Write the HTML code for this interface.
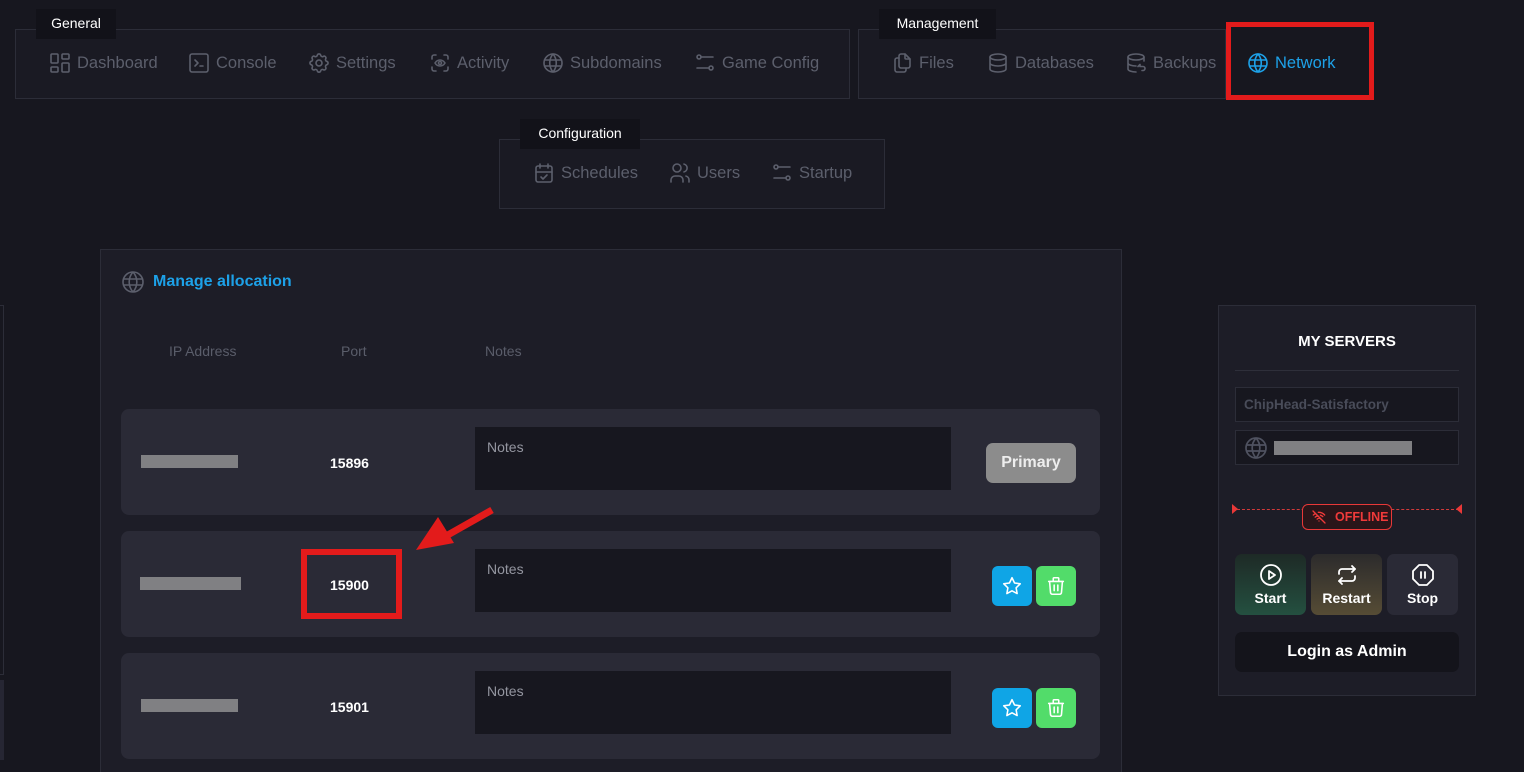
<!DOCTYPE html>
<html style="overflow:hidden;width:1524px;height:772px"><head><meta charset="utf-8"><style>
*{box-sizing:border-box;margin:0;padding:0}
body{width:1524px;height:772px;background:#17171f;font-family:"Liberation Sans",sans-serif;position:relative;overflow:hidden;color:#fff}
.a{position:absolute}
.box{position:absolute;border:1px solid #2c2d38;background:#1a1a23}
.lbl{position:absolute;background:#121219;color:#fff;font-size:14px;padding:6px 16px 8px;}
.nav{position:absolute;display:flex;align-items:center;gap:5px;color:#5c5f6c;font-size:16.5px}
.nav svg{width:24px;height:24px;fill:none;stroke:#5c5f6c;stroke-width:1.6;stroke-linecap:round;stroke-linejoin:round}
.row{position:absolute;left:121px;width:979px;height:106px;background:#2a2a36;border-radius:8px}
.ip{position:absolute;height:13px;background:#808083}
.port{position:absolute;font-weight:bold;font-size:14px;color:#fff}
.notes{position:absolute;left:354px;top:18px;width:476px;height:63px;background:#17171f;color:#9496a0;font-size:14px;padding:12px}
.btn{position:absolute;width:40px;height:40px;border-radius:6px;display:flex;align-items:center;justify-content:center}
.btn svg{width:22px;height:22px;fill:none;stroke:#fff;stroke-width:1.7;stroke-linejoin:round;stroke-linecap:round}
.hdr{position:absolute;top:343px;color:#5a5d6a;font-size:14px}
.sb{position:absolute;top:554px;width:71px;height:61px;border-radius:7px;display:flex;flex-direction:column;align-items:center;justify-content:center;font-weight:bold;font-size:14px;color:#fff;gap:3px}
.sb svg{width:24px;height:24px;fill:none;stroke:#fff;stroke-width:1.8;stroke-linecap:round;stroke-linejoin:round}
</style></head><body>

<div class="a" style="left:0;top:305px;width:4px;height:370px;border:1px solid #2c2d38;border-left:none"></div>
<div class="a" style="left:0;top:680px;width:4px;height:80px;background:#262633"></div>

<!-- General -->
<div class="box" style="left:15px;top:29px;width:835px;height:70px"></div>
<div class="lbl" style="left:36px;top:9px;width:80px;text-align:center;padding:6px 0 8px">General</div>
<div class="nav" style="left:48px;top:51px"><svg viewBox="0 0 24 24"><rect x="3" y="3" width="7" height="9" rx="1"/><rect x="14" y="3" width="7" height="5" rx="1"/><rect x="14" y="12" width="7" height="9" rx="1"/><rect x="3" y="16" width="7" height="5" rx="1"/></svg>Dashboard</div>
<div class="nav" style="left:187px;top:51px"><svg viewBox="0 0 24 24"><rect x="3" y="3" width="18" height="18" rx="2"/><path d="M8 9l3 3-3 3M13 15h3"/></svg>Console</div>
<div class="nav" style="left:307px;top:51px"><svg viewBox="0 0 24 24"><circle cx="12" cy="12" r="3"/><path d="M10.3 4.3c.4-1.8 3-1.8 3.4 0a1.7 1.7 0 0 0 2.6 1.1c1.5-.9 3.3.8 2.4 2.4a1.7 1.7 0 0 0 1 2.5c1.800.5 1.8 3 0 3.5a1.7 1.7 0 0 0-1 2.5c.9 1.6-.9 3.3-2.4 2.4a1.7 1.7 0 0 0-2.6 1.1c-.4 1.8-3 1.8-3.4 0a1.7 1.7 0 0 0-2.6-1.1c-1.5.9-3.3-.8-2.4-2.4a1.7 1.7 0 0 0-1-2.5c-1.8-.5-1.8-3 0-3.5a1.7 1.7 0 0 0 1-2.5c-.9-1.6.9-3.3 2.4-2.4a1.7 1.7 0 0 0 2.6-1.1z"/></svg>Settings</div>
<div class="nav" style="left:428px;top:51px"><svg viewBox="0 0 24 24"><path d="M4 8V6a2 2 0 0 1 2-2h2M4 16v2a2 2 0 0 0 2 2h2M16 4h2a2 2 0 0 1 2 2v2M16 20h2a2 2 0 0 0 2-2v-2"/><circle cx="12" cy="12" r="1.5"/><path d="M7 12c2.5-4 7.5-4 10 0-2.5 4-7.5 4-10 0z"/></svg>Activity</div>
<div class="nav" style="left:541px;top:51px"><svg viewBox="0 0 24 24"><circle cx="12" cy="12" r="9"/><path d="M3.6 9h16.8M3.6 15h16.8M12 3a14 14 0 0 1 0 18M12 3a14 14 0 0 0 0 18"/></svg>Subdomains</div>
<div class="nav" style="left:693px;top:51px"><svg viewBox="0 0 24 24"><circle cx="6" cy="6" r="2"/><path d="M8 6h12"/><circle cx="18" cy="17" r="2"/><path d="M4 17h12"/></svg>Game Config</div>

<!-- Management -->
<div class="box" style="left:858px;top:29px;width:368px;height:70px"></div>
<div class="lbl" style="left:879px;top:9px;width:117px;text-align:center;padding:6px 0 8px">Management</div>
<div class="nav" style="left:890px;top:51px"><svg viewBox="0 0 24 24"><path d="M15 3v4a1 1 0 0 0 1 1h4"/><path d="M18 17h-7a2 2 0 0 1-2-2V5a2 2 0 0 1 2-2h4l5 5v7a2 2 0 0 1-2 2z"/><path d="M16 17v2a2 2 0 0 1-2 2H7a2 2 0 0 1-2-2V9a2 2 0 0 1 2-2h2"/></svg>Files</div>
<div class="nav" style="left:986px;top:51px"><svg viewBox="0 0 24 24"><ellipse cx="12" cy="6" rx="8" ry="3"/><path d="M4 6v6c0 1.7 3.6 3 8 3s8-1.3 8-3V6M4 12v6c0 1.7 3.6 3 8 3s8-1.3 8-3v-6"/></svg>Databases</div>
<div class="nav" style="left:1124px;top:51px"><svg viewBox="0 0 24 24"><ellipse cx="12" cy="6" rx="8" ry="3"/><path d="M4 6v6c0 1.7 3.6 3 8 3M20 6v4M4 12v6c0 1.7 3.6 3 8 3"/><path d="M14 15.5l2-2v2h3a2 2 0 1 1 0 4h-1"/></svg>Backups</div>
<div class="nav" style="left:1246px;top:51px;color:#1da1e8"><svg viewBox="0 0 24 24" style="stroke:#1da1e8"><circle cx="12" cy="12" r="9"/><path d="M3.6 9h16.8M3.6 15h16.8M12 3a14 14 0 0 1 0 18M12 3a14 14 0 0 0 0 18"/></svg>Network</div>
<div class="a" style="left:1226px;top:22px;width:148px;height:78px;border:5px solid #e31b1b"></div>

<!-- Configuration -->
<div class="box" style="left:499px;top:139px;width:386px;height:70px"></div>
<div class="lbl" style="left:520px;top:119px;width:120px;text-align:center;padding:6px 0 8px">Configuration</div>
<div class="nav" style="left:532px;top:161px"><svg viewBox="0 0 24 24"><rect x="4" y="5" width="16" height="16" rx="2"/><path d="M16 3v4M8 3v4M4 11h16M9 16l2 2 4-4"/></svg>Schedules</div>
<div class="nav" style="left:668px;top:161px"><svg viewBox="0 0 24 24"><circle cx="9" cy="7" r="4"/><path d="M3 21v-2a4 4 0 0 1 4-4h4a4 4 0 0 1 4 4v2M16 3.1a4 4 0 0 1 0 7.8M21 21v-2a4 4 0 0 0-3-3.9"/></svg>Users</div>
<div class="nav" style="left:770px;top:161px"><svg viewBox="0 0 24 24"><circle cx="6" cy="6" r="2"/><path d="M8 6h12"/><circle cx="18" cy="17" r="2"/><path d="M4 17h12"/></svg>Startup</div>

<!-- Main panel -->
<div class="a" style="left:100px;top:249px;width:1022px;height:523px;background:#1d1d27;border:1px solid #2c2d38;border-bottom:none"></div>
<svg class="a" style="left:121px;top:270px" width="24" height="24" viewBox="0 0 24 24" fill="none" stroke="#5c5f6c" stroke-width="1.6"><circle cx="12" cy="12" r="10"/><path d="M2.6 9h18.8M2.6 15h18.8M12 2a15 15 0 0 1 0 20M12 2a15 15 0 0 0 0 20"/></svg>
<div class="a" style="left:153px;top:273px;color:#1da1e8;font-weight:bold;font-size:16px">Manage allocation</div>
<div class="hdr" style="left:169px">IP Address</div>
<div class="hdr" style="left:341px">Port</div>
<div class="hdr" style="left:485px">Notes</div>

<div class="row" style="top:409px"><div class="ip" style="left:20px;top:46px;width:97px"></div><div class="port" style="left:209px;top:46px">15896</div><div class="notes">Notes</div>
<div class="a" style="left:865px;top:34px;width:90px;height:40px;border-radius:7px;background:#8c8c8c;color:#eee;font-weight:bold;font-size:16px;text-align:center;line-height:40px">Primary</div></div>

<div class="row" style="top:531px"><div class="ip" style="left:19px;top:46px;width:101px"></div><div class="port" style="left:209px;top:46px">15900</div><div class="notes">Notes</div>
<div class="btn" style="left:871px;top:35px;background:#0fa5e6"><svg viewBox="0 0 24 24"><path d="M12 3l2.8 5.7 6.2.9-4.5 4.4 1.1 6.2L12 17.3 6.4 20.2l1.1-6.2L3 9.6l6.2-.9z"/></svg></div>
<div class="btn" style="left:915px;top:35px;background:#52dc6a"><svg viewBox="0 0 24 24"><path d="M4 7h16M10 11v6M14 11v6M5 7l1 12a2 2 0 0 0 2 2h8a2 2 0 0 0 2-2l1-12M9 7V4a1 1 0 0 1 1-1h4a1 1 0 0 1 1 1v3"/></svg></div></div>

<div class="row" style="top:653px"><div class="ip" style="left:20px;top:46px;width:97px"></div><div class="port" style="left:209px;top:46px">15901</div><div class="notes">Notes</div>
<div class="btn" style="left:871px;top:35px;background:#0fa5e6"><svg viewBox="0 0 24 24"><path d="M12 3l2.8 5.7 6.2.9-4.5 4.4 1.1 6.2L12 17.3 6.4 20.2l1.1-6.2L3 9.6l6.2-.9z"/></svg></div>
<div class="btn" style="left:915px;top:35px;background:#52dc6a"><svg viewBox="0 0 24 24"><path d="M4 7h16M10 11v6M14 11v6M5 7l1 12a2 2 0 0 0 2 2h8a2 2 0 0 0 2-2l1-12M9 7V4a1 1 0 0 1 1-1h4a1 1 0 0 1 1 1v3"/></svg></div></div>

<!-- red annotation -->
<div class="a" style="left:301px;top:549px;width:101px;height:70px;border:6px solid #e31b1b"></div>
<svg class="a" style="left:410px;top:500px" width="90" height="60" viewBox="0 0 90 60"><path d="M82 10L36 36" stroke="#e31b1b" stroke-width="7"/><path d="M6 50L28 17L44 43z" fill="#e31b1b"/></svg>

<!-- right card -->
<div class="a" style="left:1218px;top:305px;width:258px;height:391px;background:#1d1d27;border:1px solid #2c2d38"></div>
<div class="a" style="left:1218px;top:333px;width:258px;text-align:center;font-weight:bold;font-size:15px">MY SERVERS</div>
<div class="a" style="left:1235px;top:370px;width:224px;height:1px;background:#2e2f3a"></div>
<div class="a" style="left:1235px;top:387px;width:224px;height:35px;background:#17171f;border:1px solid #2c2d38;color:#494c59;font-weight:bold;font-size:13.5px;padding:9px 8px">ChipHead-Satisfactory</div>
<div class="a" style="left:1235px;top:430px;width:224px;height:35px;background:#17171f;border:1px solid #2c2d38"></div>
<svg class="a" style="left:1244px;top:436px" width="24" height="24" viewBox="0 0 24 24" fill="none" stroke="#4f5260" stroke-width="1.7"><circle cx="12" cy="12" r="10"/><path d="M2.6 9h18.8M2.6 15h18.8M12 2a15 15 0 0 1 0 20M12 2a15 15 0 0 0 0 20"/></svg>
<div class="a" style="left:1274px;top:441px;width:138px;height:14px;background:#808083"></div>
<div class="a" style="left:1237px;top:509px;width:222px;border-top:1px dashed #d03a3a"></div>
<div class="a" style="left:1232px;top:504px;width:0;height:0;border-top:5px solid transparent;border-bottom:5px solid transparent;border-left:6px solid #e83838"></div>
<div class="a" style="left:1456px;top:504px;width:0;height:0;border-top:5px solid transparent;border-bottom:5px solid transparent;border-right:6px solid #e83838"></div>
<div class="a" style="left:1302px;top:504px;width:90px;height:26px;background:#2a1519;border:1px solid #e83838;border-radius:6px;color:#f03a3a;font-weight:bold;font-size:12.5px;padding:5px 0 0 32px">OFFLINE</div>
<svg class="a" style="left:1311px;top:509px" width="16" height="16" viewBox="0 0 24 24" fill="none" stroke="#f03a3a" stroke-width="2" stroke-linecap="round"><path d="M3 3l18 18M12 18h.01M9.2 15.2a4 4 0 0 1 5.6 0M6.3 12.2a8 8 0 0 1 4.2-2M3.5 9a12 12 0 0 1 3.4-2.2M14 9.3a8 8 0 0 1 3.7 2.1M11 5a12 12 0 0 1 9.5 4"/></svg>
<div class="sb" style="left:1235px;background:linear-gradient(#1e2a26,#245040)"><svg viewBox="0 0 24 24"><circle cx="12" cy="12" r="10"/><path d="M10 8l6 4-6 4z"/></svg>Start</div>
<div class="sb" style="left:1311px;background:linear-gradient(#2c2b2c,#564c35)"><svg viewBox="0 0 24 24"><path d="M4 11V9a3 3 0 0 1 3-3h13l-3-3M20 13v2a3 3 0 0 1-3 3H4l3 3"/><path d="M17 9l3-3"/><path d="M7 15l-3 3"/></svg>Restart</div>
<div class="sb" style="left:1387px;background:#2a2a36"><svg viewBox="0 0 24 24"><path d="M8.1 2h7.8L22 8.1v7.8L15.9 22H8.1L2 15.9V8.1z"/><path d="M10 9v6M14 9v6"/></svg>Stop</div>
<div class="a" style="left:1235px;top:632px;width:224px;height:40px;background:#14141b;border-radius:7px;text-align:center;line-height:40px;font-weight:bold;font-size:16px">Login as Admin</div>
</body></html>
